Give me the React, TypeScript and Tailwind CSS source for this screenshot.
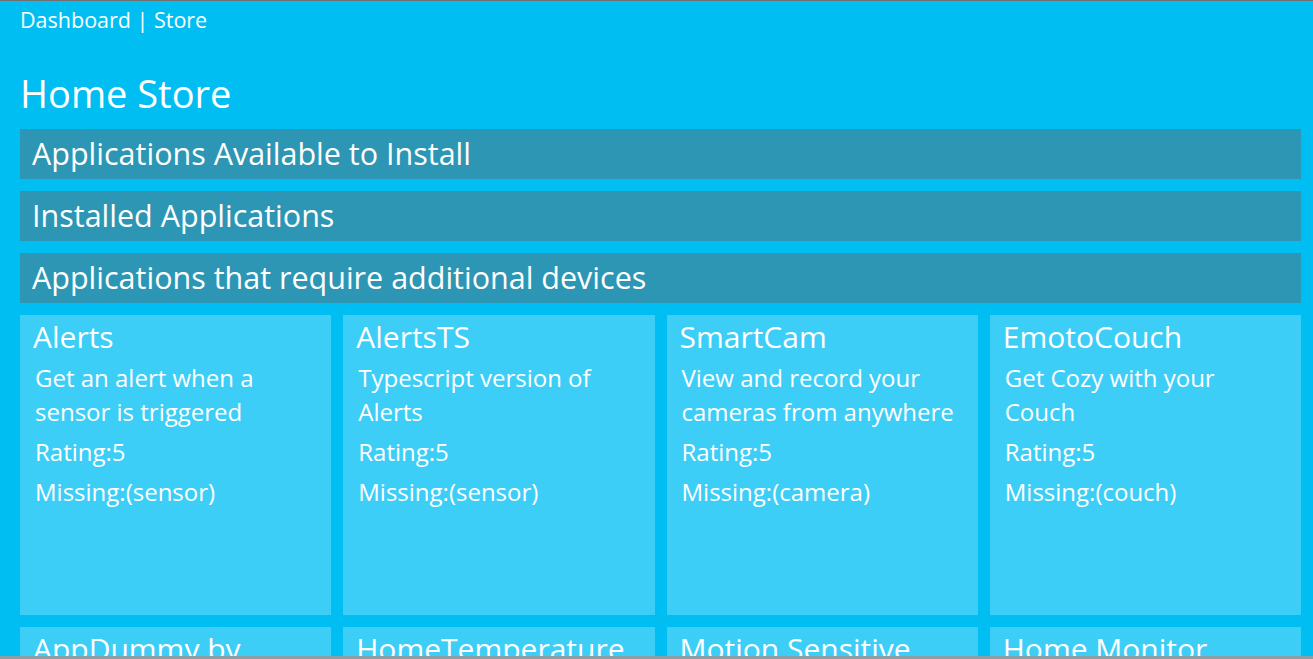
import React from 'react'

type App = {
  name: string
  description: string
  rating: number
  missing: string
}

const sections = [
  'Applications Available to Install',
  'Installed Applications',
  'Applications that require additional devices',
]

const apps: App[] = [
  { name: 'Alerts', description: 'Get an alert when a sensor is triggered', rating: 5, missing: 'sensor' },
  { name: 'AlertsTS', description: 'Typescript version of Alerts', rating: 5, missing: 'sensor' },
  { name: 'SmartCam', description: 'View and record your cameras from anywhere', rating: 5, missing: 'camera' },
  { name: 'EmotoCouch', description: 'Get Cozy with your Couch', rating: 5, missing: 'couch' },
  { name: 'AppDummy by Microsoft', description: 'A sample application', rating: 5, missing: 'dummy' },
  { name: 'HomeTemperature', description: 'Track the temperature in your home', rating: 5, missing: 'sensor' },
  { name: 'Motion Sensitive Camera', description: 'Record when motion is detected', rating: 5, missing: 'camera' },
  { name: 'Home Monitor', description: 'Keep an eye on your home', rating: 5, missing: 'sensor' },
]

const AppTile: React.FC<{ app: App }> = ({ app }) => {
  return (
    <div className="h-[300px] bg-[#3dcef8] pl-[13px] pr-3 pt-[3px] overflow-hidden">
      <h3 className="text-[30px] leading-[38px]">{app.name}</h3>
      <div className="mt-[5px] pl-[2px] text-[24px]">
        <p className="leading-[34px]">{app.description}</p>
        <p className="mt-[6px] leading-[34px]">Rating:{app.rating}</p>
        <p className="mt-[6px] leading-[34px]">Missing:({app.missing})</p>
      </div>
    </div>
  )
}

const App: React.FC = () => {
  return (
    <div className="h-screen overflow-hidden bg-[#00bef2] border-t border-[#707070] pl-5 pr-3 text-white font-['Segoe_UI','Open_Sans',sans-serif]">
      <div className="h-[40px] text-[21.5px] leading-[38px]">Dashboard | Store</div>
      <h1 className="h-[88px] pt-[26px] text-[38px] leading-[52px]">Home Store</h1>

      <div className="flex flex-col gap-3">
        {sections.map((s) => (
          <div key={s} className="h-[50px] bg-[#2c96b4] px-3 text-[30.5px] leading-[48px]">
            {s}
          </div>
        ))}
      </div>

      <div className="mt-3 grid grid-cols-4 gap-3">
        {apps.map((a) => (
          <AppTile key={a.name} app={a} />
        ))}
      </div>

      <div className="fixed bottom-0 left-0 right-0 h-[3px] bg-[#8c9ea6]" />
    </div>
  )
}

export default App
